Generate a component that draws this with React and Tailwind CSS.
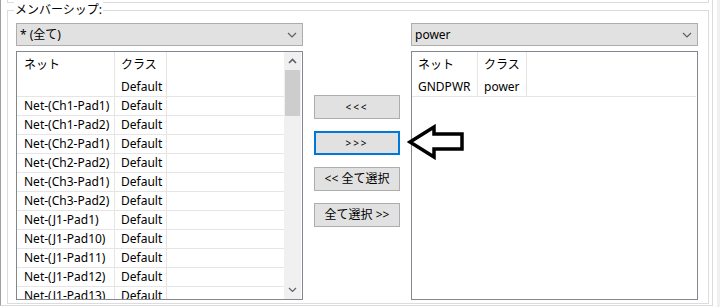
const font = { fontFamily: '"Noto Sans", "Noto Sans CJK JP", sans-serif' };

const leftRows = [
  ["", "Default"],
  ["Net-(Ch1-Pad1)", "Default"],
  ["Net-(Ch1-Pad2)", "Default"],
  ["Net-(Ch2-Pad1)", "Default"],
  ["Net-(Ch2-Pad2)", "Default"],
  ["Net-(Ch3-Pad1)", "Default"],
  ["Net-(Ch3-Pad2)", "Default"],
  ["Net-(J1-Pad1)", "Default"],
  ["Net-(J1-Pad10)", "Default"],
  ["Net-(J1-Pad11)", "Default"],
  ["Net-(J1-Pad12)", "Default"],
  ["Net-(J1-Pad13)", "Default"],
];

const Chevron = () => (
  <svg width="10" height="6" viewBox="0 0 10 6" className="shrink-0">
    <path d="M1 1 L5 5 L9 1" fill="none" stroke="#606060" strokeWidth="1.2" />
  </svg>
);

const Combo = ({ value }) => (
  <div className="h-[23px] bg-[#e1e1e1] border border-[#adadad] flex items-center pl-[3px] pr-[5px] text-[12px] text-black">
    <span className="flex-1">{value}</span>
    <Chevron />
  </div>
);

const Button = ({ children, focused }) => (
  <div
    className={
      "h-[24px] w-[86px] bg-[#e1e1e1] flex items-center justify-center text-[12px] text-black " +
      (focused ? "border-2 border-[#0078d7]" : "border border-[#adadad]")
    }
  >
    {children}
  </div>
);

const App = () => {
  return (
    <div className="w-[720px] h-[307px] bg-white flex overflow-hidden" style={font}>
      <div className="w-[713px] h-[306px] shrink-0 border-l border-l-[#a0a0a0] border-r border-b border-r-[#dcdcdc] border-b-[#dcdcdc] pl-[6px] pr-[3px]">
        {/* previous group bottom */}
        <div className="h-[3px] border-x border-b border-[#dcdcdc]"></div>

        {/* membership group */}
        <div className="mt-[7px] h-[294px] relative border border-[#dcdcdc] pl-[8px] pt-[12px] flex">
          <div className="absolute left-[6px] top-[-9px] bg-white px-[1px] text-[12px] leading-[16px] text-black">
            メンバーシップ:
          </div>

          {/* left side */}
          <div className="w-[287px] flex flex-col">
            <Combo value="* (全て)" />
            <div className="mt-[5px] h-[249px] border border-[#828790] flex overflow-hidden">
              <div className="flex-1 text-[12px] text-black">
                <div className="h-[26px] flex items-center">
                  <div className="w-[98px] h-full border-r border-[#e5e5e5] pl-[7px] flex items-center">ネット</div>
                  <div className="w-[52px] h-full border-r border-[#e5e5e5] pl-[6px] flex items-center">クラス</div>
                </div>
                {leftRows.map(([net, cls], i) => (
                  <div key={i} className="h-[19px] flex border-b border-[#e5e5e5]">
                    <div className="w-[98px] border-r border-[#e5e5e5] pl-[7px] flex items-center whitespace-nowrap">{net}</div>
                    <div className="w-[52px] border-r border-[#e5e5e5] pl-[6px] flex items-center">{cls}</div>
                  </div>
                ))}
              </div>
              {/* scrollbar */}
              <div className="w-[17px] bg-[#f0f0f0] flex flex-col items-center mr-[1px]">
                <div className="h-[18px] flex items-center justify-center">
                  <svg width="9" height="6" viewBox="0 0 9 6">
                    <path d="M1 5 L4.5 1.5 L8 5" fill="none" stroke="#606060" strokeWidth="1.6" />
                  </svg>
                </div>
                <div className="w-[15px] h-[46px] bg-[#cdcdcd]"></div>
                <div className="flex-1"></div>
                <div className="h-[18px] flex items-center justify-center">
                  <svg width="9" height="6" viewBox="0 0 9 6">
                    <path d="M1 1 L4.5 4.5 L8 1" fill="none" stroke="#606060" strokeWidth="1.2" />
                  </svg>
                </div>
              </div>
            </div>
          </div>

          {/* middle buttons */}
          <div className="ml-[11px] pt-[72px] flex flex-col gap-[12px]">
            <Button><span className="tracking-[2px] text-[10px]">&lt;&lt;&lt;</span></Button>
            <Button focused><span className="tracking-[2px] text-[10px]">&gt;&gt;&gt;</span></Button>
            <Button>&lt;&lt; 全て選択</Button>
            <Button>全て選択 &gt;&gt;</Button>
          </div>

          {/* right side */}
          <div className="ml-[11px] w-[287px] flex flex-col">
            <Combo value="power" />
            <div className="mt-[5px] h-[249px] border border-[#828790] text-[12px] text-black">
              <div className="flex border-b border-[#e5e5e5] mr-[1px]">
                <div className="flex">
                  <div className="w-[66px] border-r border-[#e5e5e5]">
                    <div className="h-[26px] pl-[6px] flex items-center">ネット</div>
                    <div className="h-[18px] pl-[6px] flex items-center">GNDPWR</div>
                  </div>
                  <div className="w-[49px] border-r border-[#e5e5e5]">
                    <div className="h-[26px] pl-[6px] flex items-center">クラス</div>
                    <div className="h-[18px] pl-[6px] flex items-center">power</div>
                  </div>
                </div>
              </div>
            </div>
          </div>

          {/* annotation arrow */}
          <svg className="absolute left-[398px] top-[113px]" width="60" height="36" viewBox="0 0 60 36">
            <path
              d="M4 18 L28 3 L28 10 L56 10 L56 25 L28 25 L28 33 Z"
              fill="white"
              stroke="black"
              strokeWidth="3.5"
              strokeLinejoin="miter"
            />
          </svg>
        </div>
      </div>
      <div className="w-[4px] shrink-0"></div>
      <div className="flex-1 bg-[#f0f0f0]"></div>
    </div>
  );
};

export default App;
